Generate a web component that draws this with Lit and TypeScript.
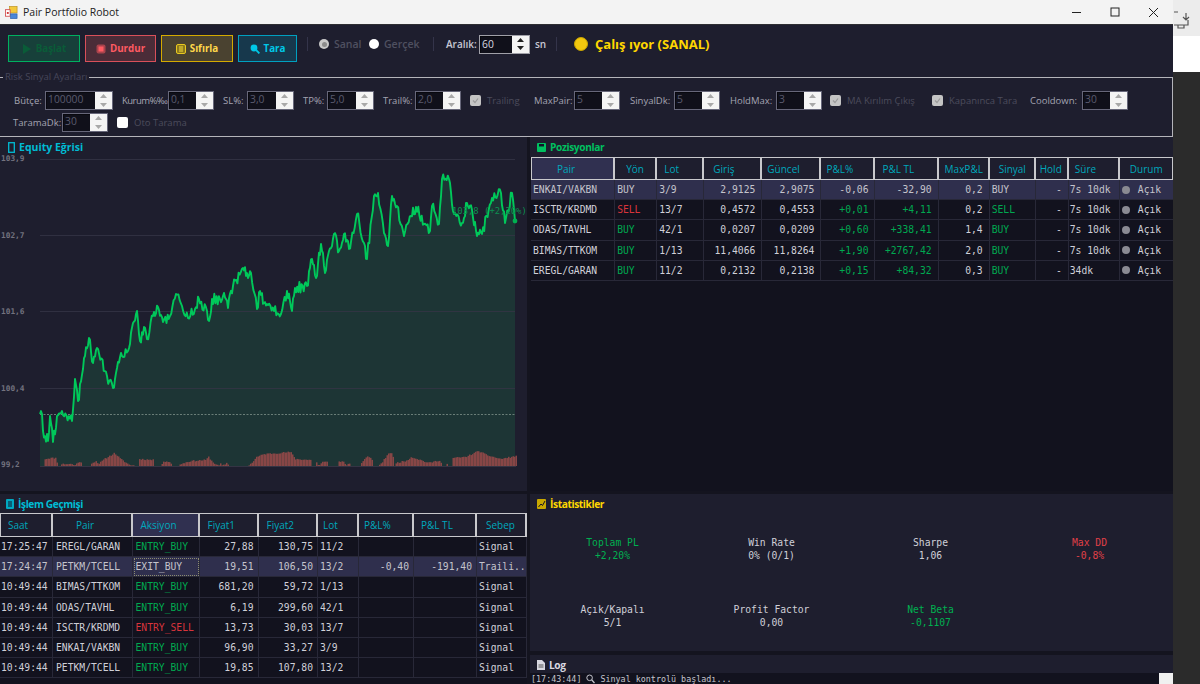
import { LitElement, html, css, svg } from "lit";
import { customElement } from "lit/decorators.js";

function rng(seed: number) {
  let s = seed;
  return () => {
    s = (s * 1664525 + 1013904223) % 4294967296;
    return s / 4294967296;
  };
}

const anchors: [number, number][] = [
  [40,414],[42,414],[43,431],[48,441],[50,416],[53,442],[57,416],[62,411],[72,421],[75,379],[78,401],[83,369],[85,356],[89,338],[93,363],[97,348],[107,376],[113,388],[117,368],[122,356],[128,351],[133,323],[137,311],[140,341],[144,327],[147,339],[153,316],[158,307],[163,322],[170,316],[176,294],[182,306],[188,318],[195,309],[199,299],[207,311],[209,321],[212,299],[220,299],[224,293],[228,308],[233,286],[243,268],[248,278],[251,273],[257,309],[260,291],[264,303],[268,305],[274,311],[281,314],[287,291],[292,311],[295,288],[307,286],[312,259],[316,278],[321,244],[325,273],[329,251],[334,234],[339,251],[344,234],[349,249],[357,214],[364,243],[367,259],[374,196],[378,193],[384,233],[388,246],[392,196],[397,206],[404,236],[411,216],[416,207],[424,224],[430,231],[432,206],[439,224],[442,179],[449,179],[454,214],[462,223],[467,203],[472,210],[477,236],[482,234],[492,198],[501,193],[505,223],[512,193],[515,221],
];

function linePoints(): [number, number][] {
  const r = rng(7);
  const out: [number, number][] = [];
  for (let i = 0; i < anchors.length - 1; i++) {
    const [x0, y0] = anchors[i];
    const [x1, y1] = anchors[i + 1];
    const n = Math.max(1, Math.round((x1 - x0) / 1.1));
    for (let k = 0; k < n; k++) {
      const t = k / n;
      const noise = k === 0 ? 0 : (r() - 0.5) * 11;
      out.push([x0 + (x1 - x0) * t, y0 + (y1 - y0) * t + noise]);
    }
  }
  out.push([515, 221]);
  return out;
}

const ddAnchors: [number, number][] = [
  [40,0],[43,0],[44,7],[50,8],[56,8],[57,0],[60,0],[61,2],[72,2],[74,0],[77,4],[81,3],[82,0],[90,0],[91,3],[96,5],[98,2],[104,7],[114,13],[120,7],[129,1],[138,0],[139,7],[153,6],[154,0],[161,0],[162,5],[170,4],[171,0],[178,0],[180,2],[190,5],[205,6],[208,9],[212,4],[218,0],[220,2],[222,0],[226,3],[229,0],[248,0],[252,4],[256,9],[264,12],[278,13],[290,14],[295,7],[310,6],[311,0],[315,0],[316,4],[318,0],[322,4],[327,4],[328,0],[337,0],[338,5],[344,4],[345,0],[349,3],[350,0],[360,0],[362,5],[368,10],[372,5],[373,0],[377,0],[382,4],[388,13],[392,12],[394,0],[394.5,3],[405,5],[411,9],[420,6],[428,3],[440,6],[441,0],[445,0],[446,4],[447,0],[451,0],[452,8],[465,9],[478,15],[486,11],[500,7],[516,10],
];

function ddHeight(x: number) {
  for (let i = 0; i < ddAnchors.length - 1; i++) {
    const [a, h0] = ddAnchors[i];
    const [b, h1] = ddAnchors[i + 1];
    if (x >= a && x <= b) return h0 + (h1 - h0) * ((x - a) / Math.max(b - a, 0.01));
  }
  return 0;
}

const G = "pos";
const R = "neg";

const posCols = [
  { w: 84, x: 25, t: "Pair" }, { w: 42, x: 11, t: "Yön" }, { w: 47, x: 7, t: "Lot" }, { w: 58, x: 9, t: "Giriş" },
  { w: 59, x: 5, t: "Güncel" }, { w: 54, x: 5, t: "P&L%" }, { w: 63, x: 7, t: "P&L TL" }, { w: 51, x: 6, t: "MaxP&L" },
  { w: 46, x: 9, t: "Sinyal" }, { w: 33, x: 4, t: "Hold" }, { w: 51, x: 6, t: "Süre" }, { w: 54, x: 10, t: "Durum" },
];
const posRows = [
  { sel: true, pair: "ENKAI/VAKBN", dir: "BUY", dc: "", lot: "3/9", a: "2,9125", b: "2,9075", p: "-0,06", tl: "-32,90", pc: "", m: "0,2", s: "BUY", sc: "", sure: "7s 10dk" },
  { pair: "ISCTR/KRDMD", dir: "SELL", dc: R, lot: "13/7", a: "0,4572", b: "0,4553", p: "+0,01", tl: "+4,11", pc: G, m: "0,2", s: "SELL", sc: G, sure: "7s 10dk" },
  { pair: "ODAS/TAVHL", dir: "BUY", dc: G, lot: "42/1", a: "0,0207", b: "0,0209", p: "+0,60", tl: "+338,41", pc: G, m: "1,4", s: "BUY", sc: G, sure: "7s 10dk" },
  { pair: "BIMAS/TTKOM", dir: "BUY", dc: G, lot: "1/13", a: "11,4066", b: "11,8264", p: "+1,90", tl: "+2767,42", pc: G, m: "2,0", s: "BUY", sc: G, sure: "7s 10dk" },
  { pair: "EREGL/GARAN", dir: "BUY", dc: G, lot: "11/2", a: "0,2132", b: "0,2138", p: "+0,15", tl: "+84,32", pc: G, m: "0,3", s: "BUY", sc: G, sure: "34dk" },
];

const histCols = [
  { w: 53, x: 7, t: "Saat" }, { w: 79.5, x: 23, t: "Pair" }, { w: 67, x: 8, t: "Aksiyon", sel: true }, { w: 59, x: 8, t: "Fiyat1" },
  { w: 59.5, x: 8, t: "Fiyat2" }, { w: 41, x: 5, t: "Lot" }, { w: 55, x: 5, t: "P&L%" }, { w: 63, x: 7, t: "P&L TL" }, { w: 50, x: 9, t: "Sebep" },
];
const histRows = [
  ["17:25:47", "EREGL/GARAN", "ENTRY_BUY", "27,88", "130,75", "11/2", "", "", "Signal"],
  ["17:24:47", "PETKM/TCELL", "EXIT_BUY", "19,51", "106,50", "13/2", "-0,40", "-191,40", "Traili.."],
  ["10:49:44", "BIMAS/TTKOM", "ENTRY_BUY", "681,20", "59,72", "1/13", "", "", "Signal"],
  ["10:49:44", "ODAS/TAVHL", "ENTRY_BUY", "6,19", "299,60", "42/1", "", "", "Signal"],
  ["10:49:44", "ISCTR/KRDMD", "ENTRY_SELL", "13,73", "30,03", "13/7", "", "", "Signal"],
  ["10:49:44", "ENKAI/VAKBN", "ENTRY_BUY", "96,90", "33,27", "3/9", "", "", "Signal"],
  ["10:49:44", "PETKM/TCELL", "ENTRY_BUY", "19,85", "107,80", "13/2", "", "", "Signal"],
];

const stats = [
  ["Toplam PL", "+2,20%", G], ["Win Rate", "0% (0/1)", ""], ["Sharpe", "1,06", ""], ["Max DD", "-0,8%", R],
  ["Açık/Kapalı", "5/1", ""], ["Profit Factor", "0,00", ""], ["Net Beta", "-0,1107", G],
];

type P =
  | { k: "s"; label: string; value: string; w: number; ml: number; lw: number; tight?: boolean }
  | { k: "c"; label: string; on: boolean; ml: number; lw: number };
const row1: P[] = [
  { k: "s", label: "Bütçe:", value: "100000", w: 68, ml: 14, lw: 31 },
  { k: "s", label: "Kurum%‰:", value: "0,1", w: 46, ml: 9, lw: 46, tight: true },
  { k: "s", label: "SL%:", value: "3,0", w: 47, ml: 9, lw: 24 },
  { k: "s", label: "TP%:", value: "5,0", w: 47, ml: 9, lw: 24 },
  { k: "s", label: "Trail%:", value: "2,0", w: 46, ml: 9, lw: 32 },
  { k: "c", label: "Trailing", on: true, ml: 9, lw: 40 },
  { k: "s", label: "MaxPair:", value: "5", w: 46, ml: 13, lw: 40 },
  { k: "s", label: "SinyalDk:", value: "5", w: 46, ml: 10, lw: 44 },
  { k: "s", label: "HoldMax:", value: "3", w: 46, ml: 10, lw: 46 },
  { k: "c", label: "MA Kırılım Çıkış", on: true, ml: 8, lw: 78 },
  { k: "c", label: "Kapanınca Tara", on: true, ml: 13, lw: 76 },
  { k: "s", label: "Cooldown:", value: "30", w: 46, ml: 11, lw: 52 },
];
const row2: P[] = [
  { k: "s", label: "TaramaDk:", value: "30", w: 46, ml: 13, lw: 49 },
  { k: "c", label: "Oto Tarama", on: false, ml: 9, lw: 60 },
];

@customElement("app-root")
export class AppRoot extends LitElement {
  static styles = css`
    :host { display: block; width: 1200px; height: 684px; overflow: hidden; font-family: "Open Sans", "Noto Sans", sans-serif; }
    * { box-sizing: border-box; }
    .page { display: flex; width: 1200px; height: 684px; background: #2b2b2b; }
    .win { width: 1173px; height: 684px; display: flex; flex-direction: column; background: #1e1e2e; overflow: hidden; }
    .strip { width: 27px; display: flex; flex-direction: column; }
    .strip .a { height: 36px; background: #ececec; display: flex; padding: 11px 0 0 0; }
    .strip .b { height: 36px; background: #fff; }
    .title { height: 25px; flex: none; background: #f3f3f3; border-bottom: 1px solid #2e2e32; display: flex; align-items: center; padding-left: 5px; gap: 5px; font-size: 10.5px; color: #222; }
    .title .sp { flex: 1; }
    .wbtn { width: 38.5px; height: 24px; margin-left: -5px; display: flex; align-items: center; justify-content: center; }
    .toolbar { height: 52px; flex: none; display: flex; align-items: flex-start; padding-left: 8px; }
    .btn { height: 27px; margin-top: 10px; border: 1px solid; display: flex; align-items: center; justify-content: center; gap: 4px; font-size: 9.8px; font-weight: 700; margin-right: 5px; }
    .btn.go { width: 72px; background: #17403a; border-color: #00b060; color: #0a5c38; }
    .btn.stop { width: 71px; background: #4b2c38; border-color: #d9505a; color: #ff5a62; }
    .btn.reset { width: 72px; background: #4a4230; border-color: #d4aa00; color: #ffd84a; }
    .btn.scan { width: 59px; background: #17384c; border-color: #00a0c0; color: #00c8e8; margin-right: 10px; }
    .tools { height: 38px; display: flex; align-items: center; }
    .sep { width: 1px; height: 14px; background: #34344a; }
    .radio { width: 10px; height: 10px; border-radius: 50%; background: #fff; flex: none; }
    .radio.on { background: #c9c9c9; display: flex; align-items: center; justify-content: center; }
    .radio.on::after { content: ""; width: 5px; height: 5px; border-radius: 50%; background: #8c8c8c; }
    .rl { font-size: 10.5px; font-weight: 600; color: #4f5060; margin-left: 5px; }
    .tl { font-size: 10px; color: #c8c8d4; font-weight: 600; }
    .status { display: flex; align-items: center; font-size: 13px; font-weight: 700; color: #ffd700; }
    .dot { width: 14px; height: 14px; border-radius: 50%; background: #f2c80f; border: 1px solid #c9a400; margin-right: 7px; }
    .spin { display: flex; height: 19px; border: 1px solid #67677a; background: #10101a; flex: none; }
    .spin .v { flex: 1; font-size: 10.3px; color: #5a5b6e; padding-left: 2px; line-height: 14px; box-shadow: inset 1px 1px 0 #08080e; }
    .spin .b { width: 17px; background: #f4f4f4; display: flex; flex-direction: column; }
    .spin .b i { flex: 1; display: flex; align-items: center; justify-content: center; }
    .spin.act { border-color: #a0a0a8; }
    .spin.act .v { color: #d8d8e0; line-height: 17px; }
    .group { height: 60px; flex: none; border: 1px solid #b4b4ba; border-left: none; position: relative; padding-top: 13px; }
    .legend { position: absolute; left: 3px; top: -7px; background: #1e1e2e; padding: 0 2px; font-size: 9.5px; color: #46465a; line-height: 12px; }
    .prow { display: flex; align-items: center; height: 19px; margin-bottom: 3px; }
    .pl { font-size: 9.5px; font-weight: 500; color: #a4a4b2; white-space: nowrap; }
    .pl.tight { letter-spacing: -0.55px; }
    .cb { width: 11px; height: 11px; border-radius: 2px; background: #fff; flex: none; display: flex; align-items: center; justify-content: center; }
    .cb.on { background: #c4c4c4; }
    .cl { font-size: 9.5px; color: #4c4c5c; margin-left: 6px; white-space: nowrap; }
    .main { flex: 1; display: grid; grid-template-columns: 527px 646px; grid-template-rows: 354px 193px; background: #14141f; min-height: 0; }
    .panel { background: #1e1e2e; display: flex; flex-direction: column; min-width: 0; min-height: 0; overflow: hidden; }
    .panel.right { margin-left: 3px; }
    .panel.tab { background: #12121e; margin-top: 3px; }
    .panel.right.under { background: #14141f; margin-top: 3px; }
    .ph { height: 20px; flex: none; display: flex; align-items: center; gap: 4px; padding-left: 7px; font-size: 10.2px; letter-spacing: -0.4px; font-weight: 700; background: #1e1e2e; }
    .ph.cy { color: #00bcd4; }
    .ph.big { font-size: 10.5px; letter-spacing: 0; padding-left: 8px; }
    .ph.gr { color: #00c060; }
    .ph.ye { color: #ffd700; }
    .ph.wh { color: #d8d8e0; }
    .ph.hist { height: 19px; padding-left: 6px; }
    .chart { display: block; overflow: visible; }
    .tbl { background: #12121e; flex: 1; min-height: 0; overflow: hidden; }
    table { border-collapse: separate; border-spacing: 0; table-layout: fixed; font-family: "DejaVu Sans Mono", monospace; font-size: 9.7px; color: #d0d0d8; }
    table.p { margin-left: 1px; }
    table.h th { height: 24px; }
    th { height: 23px; padding: 0; text-align: left; font-family: "Open Sans", "Noto Sans", sans-serif; font-size: 10px; font-weight: 500; color: #00a8bc; background: #1e1e2e; border-top: 1px solid #c8c8cc; border-bottom: 1px solid #c8c8cc; border-right: 2px solid #c8c8cc; white-space: nowrap; overflow: hidden; }
    th:first-child { border-left: 1px solid #c8c8cc; }
    th.sel { background: #303050; }
    td { height: 20.2px; padding: 0 4px 0 2px; border-right: 1px solid #282838; border-bottom: 1px solid #282838; white-space: nowrap; overflow: hidden; }
    tr.sel td { background: #2f2f4d; color: #c4c4cc; }
    td.r { text-align: right; padding-right: 6px; }
    table.h td.r { padding-right: 4px; }
    td.p3 { padding-left: 3px; }
    td.p1 { padding-left: 1px; }
    td.pos { color: #00a850; }
    td.neg { color: #d8343c; }
    td.focus { outline: 1px dotted #8c8c70; outline-offset: -2px; }
    .durum { display: flex; align-items: center; gap: 8px; }
    .durum i { width: 8px; height: 8px; border-radius: 50%; background: #8a8a92; }
    .stats { flex: 1; min-height: 0; display: grid; grid-template-columns: repeat(4, 159px); grid-template-rows: 67px 67px; padding: 1px 0 0 3px; font-family: "DejaVu Sans Mono", monospace; font-size: 9.7px; color: #d0d0d8; background: #1e1e2e; }
    .stat { display: flex; flex-direction: column; align-items: center; justify-content: center; line-height: 13px; }
    .stat.pos { color: #00b050; }
    .stat.neg { color: #e04048; }
    .statspanel { height: 157px; flex: none; display: flex; flex-direction: column; background: #1e1e2e; }
    .logp { height: 29px; margin-top: 4px; flex: none; display: flex; flex-direction: column; background: #1e1e2e; }
    .logp .ph { height: 18px; padding-top: 2px; }
    .log { flex: 1; background: #12121e; display: flex; align-items: flex-start; position: relative; font-family: "DejaVu Sans Mono", monospace; font-size: 8.4px; color: #c4c4cc; padding: 1px 0 0 1px; line-height: 11px; white-space: nowrap; gap: 5px; }
    .sbar { position: absolute; right: 0; top: 0; bottom: 0; width: 14px; background: #f0f0f0; }
  `;

  spinner(v: string, w: number, act = false) {
    const c = act ? "#222" : "#a8a8a8";
    return html`<div class="spin ${act ? "act" : ""}" style="width:${w}px">
      <div class="v">${v}</div>
      <div class="b">
        <i><svg width="7" height="4" viewBox="0 0 7 4"><path d="M3.5 0L7 4H0z" fill="${c}"/></svg></i>
        <i><svg width="7" height="4" viewBox="0 0 7 4"><path d="M0 0h7L3.5 4z" fill="${c}"/></svg></i>
      </div>
    </div>`;
  }

  param(p: P) {
    if (p.k === "s") {
      return html`<span class="pl ${p.tight ? "tight" : ""}" style="margin-left:${p.ml}px;width:${p.lw}px">${p.label}</span>${this.spinner(p.value, p.w)}`;
    }
    return html`<span class="cb ${p.on ? "on" : ""}" style="margin-left:${p.ml}px">${p.on
      ? html`<svg width="9" height="9" viewBox="0 0 9 9"><path d="M2 4.5L4 6.5 7 2.5" fill="none" stroke="#9a9a9a" stroke-width="1.2"/></svg>`
      : ""}</span><span class="cl" style="width:${p.lw - 6}px">${p.label}</span>`;
  }

  chart() {
    const pts = linePoints();
    const line = pts.map((p) => `${p[0].toFixed(1)},${p[1].toFixed(1)}`).join(" ");
    const area = `40,466 ${line} 515,466`;
    const bars = [];
    const r = rng(11);
    for (let x = 43; x < 516; x += 1.5) {
      const h = ddHeight(x);
      if (h <= 0.4) continue;
      const hh = Math.max(0.6, h + (r() - 0.5) * 1.4);
      bars.push(svg`<rect x=${x} y=${466 - hh} width="1.5" height=${hh} fill="#874646"/>`);
    }
    const grid = [159, 235, 311, 388];
    const labels: [string, number][] = [["103,9", 161], ["102,7", 238], ["101,6", 314], ["100,4", 391], ["99,2", 467]];
    return html`<svg class="chart" width="527" height="334" viewBox="0 157 527 334">
      <polygon points=${area} fill="#1d3535"/>
      ${grid.map((y) => svg`<line x1="40" x2="515" y1=${y + 0.5} y2=${y + 0.5} stroke="#343444" stroke-opacity="0.85"/>`)}
      <line x1="40" x2="515" y1="414.5" y2="414.5" stroke="#6a7e78" stroke-dasharray="2 1.5"/>
      ${bars}
      <line x1="40" x2="516" y1="466.5" y2="466.5" stroke="#343444"/>
      ${labels.map(([t, y]) => svg`<text x="1" y=${y} font-family="DejaVu Sans Mono" font-weight="700" font-size="7.8" fill="#72727e">${t}</text>`)}
      <polyline points=${line} fill="none" stroke="#00c85a" stroke-width="1.9" stroke-linejoin="round"/>
      <text x="452" y="214" font-family="DejaVu Sans Mono" font-size="8.9" fill="#0d8f50">103,8 (+2,20%)</text>
      <circle cx="515" cy="221" r="2.4" fill="#00b050"/>
    </svg>`;
  }

  render() {
    return html`<div class="page">
      <div class="win">
        <div class="title">
          <svg width="13" height="13" viewBox="0 0 14 14">
            <rect x="5" y="0.5" width="8" height="7" fill="#f3c93c" stroke="#b98f1c" stroke-width="0.7"/>
            <rect x="0.5" y="4" width="5" height="7" fill="#fff" stroke="#c33" stroke-width="0.8"/>
            <rect x="2" y="6.5" width="2" height="2" fill="#c33"/>
            <rect x="6" y="8.5" width="7" height="5" fill="#4a86d8" stroke="#2a5ea8" stroke-width="0.7"/>
          </svg>
          <span>Pair Portfolio Robot</span>
          <span class="sp"></span>
          <span class="wbtn"><svg width="10" height="10" viewBox="0 0 10 10"><path d="M0 5.5h9" stroke="#222" stroke-width="1"/></svg></span>
          <span class="wbtn"><svg width="10" height="10" viewBox="0 0 10 10"><rect x="1" y="1" width="8" height="8" fill="none" stroke="#222" stroke-width="1"/></svg></span>
          <span class="wbtn"><svg width="11" height="11" viewBox="0 0 11 11"><path d="M1 1l9 9M10 1l-9 9" stroke="#222" stroke-width="1"/></svg></span>
        </div>
        <div class="toolbar">
          <div class="btn go"><svg width="10" height="10" viewBox="0 0 10 10"><path d="M1 0l8 5-8 5z" fill="#0a5c38"/></svg>Başlat</div>
          <div class="btn stop"><svg width="10" height="10" viewBox="0 0 10 10"><rect x="0.5" y="0.5" width="9" height="9" rx="2" fill="#a8434c"/><rect x="2.5" y="2.5" width="5" height="5" fill="#ff5a62"/></svg>Durdur</div>
          <div class="btn reset"><svg width="10" height="10" viewBox="0 0 10 10"><rect x="0.5" y="0.5" width="9" height="9" rx="1.5" fill="#8d7a1c" stroke="#e8c820"/><path d="M3 3h4M3 5h4M3 7h4" stroke="#f2d83a"/></svg>Sıfırla</div>
          <div class="btn scan"><svg width="10" height="10" viewBox="0 0 10 10"><circle cx="4" cy="4" r="3.4" fill="#00c8e8"/><path d="M6.2 6.2L9.4 9.4" stroke="#00c8e8" stroke-width="1.8"/></svg>Tara</div>
          <div class="tools">
            <span class="sep" style="margin-right:11px"></span>
            <span class="radio on"></span><span class="rl" style="width:35px">Sanal</span>
            <span class="radio"></span><span class="rl" style="width:49px">Gerçek</span>
            <span class="sep" style="margin-right:12px"></span>
            <span class="tl" style="width:33px">Aralık:</span>
            ${this.spinner("60", 51, true)}
            <span class="tl" style="margin-left:5px;width:21px">sn</span>
            <span class="sep" style="margin-right:17px"></span>
            <div class="status"><span class="dot"></span>Çalış ıyor (SANAL)</div>
          </div>
        </div>
        <div class="group">
          <span class="legend">Risk Sinyal Ayarları</span>
          <div class="prow">${row1.map((p) => this.param(p))}</div>
          <div class="prow">${row2.map((p) => this.param(p))}</div>
        </div>
        <div class="main">
          <div class="panel">
            <div class="ph cy big">
              <svg width="7" height="11" viewBox="0 0 7 11"><rect x="0.7" y="0.7" width="5.6" height="9.6" fill="none" stroke="#00bcd4" stroke-width="1.3"/></svg>
              Equity Eğrisi
            </div>
            ${this.chart()}
          </div>
          <div class="panel right">
            <div class="ph gr">
              <svg width="9" height="9" viewBox="0 0 9 9"><rect width="9" height="9" rx="1" fill="#00c060"/><rect x="2" y="1" width="5" height="2.5" fill="#12122a"/></svg>
              Pozisyonlar
            </div>
            <div class="tbl">
              <table class="p" style="width:${posCols.reduce((a, c) => a + c.w, 1)}px">
                <colgroup>${posCols.map((c) => html`<col style="width:${c.w}px" />`)}</colgroup>
                <thead><tr>${posCols.map((c, i) => html`<th class="${i === 0 ? "sel" : ""}" style="padding-left:${c.x}px">${c.t}</th>`)}</tr></thead>
                <tbody>
                  ${posRows.map((r) => html`<tr class="${r.sel ? "sel" : ""}">
                    <td>${r.pair}</td><td class="${r.dc}">${r.dir}</td><td>${r.lot}</td>
                    <td class="r">${r.a}</td><td class="r">${r.b}</td>
                    <td class="r ${r.pc}">${r.p}</td><td class="r ${r.pc}">${r.tl}</td>
                    <td class="r">${r.m}</td><td class="${r.sc}">${r.s}</td><td class="r">-</td><td class="p1">${r.sure}</td>
                    <td><div class="durum"><i></i>Açık</div></td>
                  </tr>`)}
                </tbody>
              </table>
            </div>
          </div>
          <div class="panel tab">
            <div class="ph cy hist">
              <svg width="8" height="10" viewBox="0 0 8 10"><rect width="8" height="10" rx="1" fill="#00a8c0"/><path d="M2 3h4M2 5h4M2 7h4" stroke="#12122a"/></svg>
              İşlem Geçmişi
            </div>
            <div class="tbl">
              <table class="h" style="width:527px">
                <colgroup>${histCols.map((c) => html`<col style="width:${c.w}px" />`)}</colgroup>
                <thead><tr>${histCols.map((c) => html`<th class="${c.sel ? "sel" : ""}" style="padding-left:${c.x}px">${c.t}</th>`)}</tr></thead>
                <tbody>
                  ${histRows.map((r, i) => {
                    const cls = r[2].includes("SELL") ? R : r[2].startsWith("ENTRY") ? G : "";
                    return html`<tr class="${i === 1 ? "sel" : ""}">
                      <td class="p1">${r[0]}</td><td class="p3">${r[1]}</td>
                      <td class="p3 ${cls} ${i === 1 ? "focus" : ""}">${r[2]}</td>
                      <td class="r">${r[3]}</td><td class="r">${r[4]}</td><td>${r[5]}</td>
                      <td class="r">${r[6]}</td><td class="r">${r[7]}</td><td>${r[8]}</td>
                    </tr>`;
                  })}
                </tbody>
              </table>
            </div>
          </div>
          <div class="panel right under">
            <div class="statspanel">
              <div class="ph ye">
                <svg width="9" height="10" viewBox="0 0 9 10"><rect width="9" height="10" rx="1" fill="#c9a800"/><path d="M1.5 8L4 5l1.5 1.5L8 2" fill="none" stroke="#12122a"/></svg>
                İstatistikler
              </div>
              <div class="stats">
                ${stats.map((s) => html`<div class="stat ${s[2]}"><span>${s[0]}</span><span>${s[1]}</span></div>`)}
              </div>
            </div>
            <div class="logp">
              <div class="ph wh">
                <svg width="8" height="10" viewBox="0 0 8 10"><path d="M0 0h5l3 3v7H0z" fill="#d8d8e0"/><path d="M1.5 5h5M1.5 7h5" stroke="#555"/></svg>
                Log
              </div>
              <div class="log">
                <span>[17:43:44]</span>
                <svg width="9" height="10" viewBox="0 0 9 10" style="flex:none"><circle cx="3.6" cy="3.8" r="2.8" fill="none" stroke="#c4c4cc" stroke-width="1"/><path d="M5.6 5.8L8.5 9" stroke="#c4c4cc" stroke-width="1.3"/></svg>
                <span>Sinyal kontrolü başladı...</span>
                <div class="sbar"></div>
              </div>
            </div>
          </div>
        </div>
      </div>
      <div class="strip">
        <div class="a"><svg width="20" height="18" viewBox="0 0 20 18"><path d="M1 1h4M15 9v5H1M11 14v3h-6v-3M13 2v7M10 6l3 3 3-3" fill="none" stroke="#555" stroke-width="1.2"/></svg></div>
        <div class="b"></div>
      </div>
    </div>`;
  }
}
